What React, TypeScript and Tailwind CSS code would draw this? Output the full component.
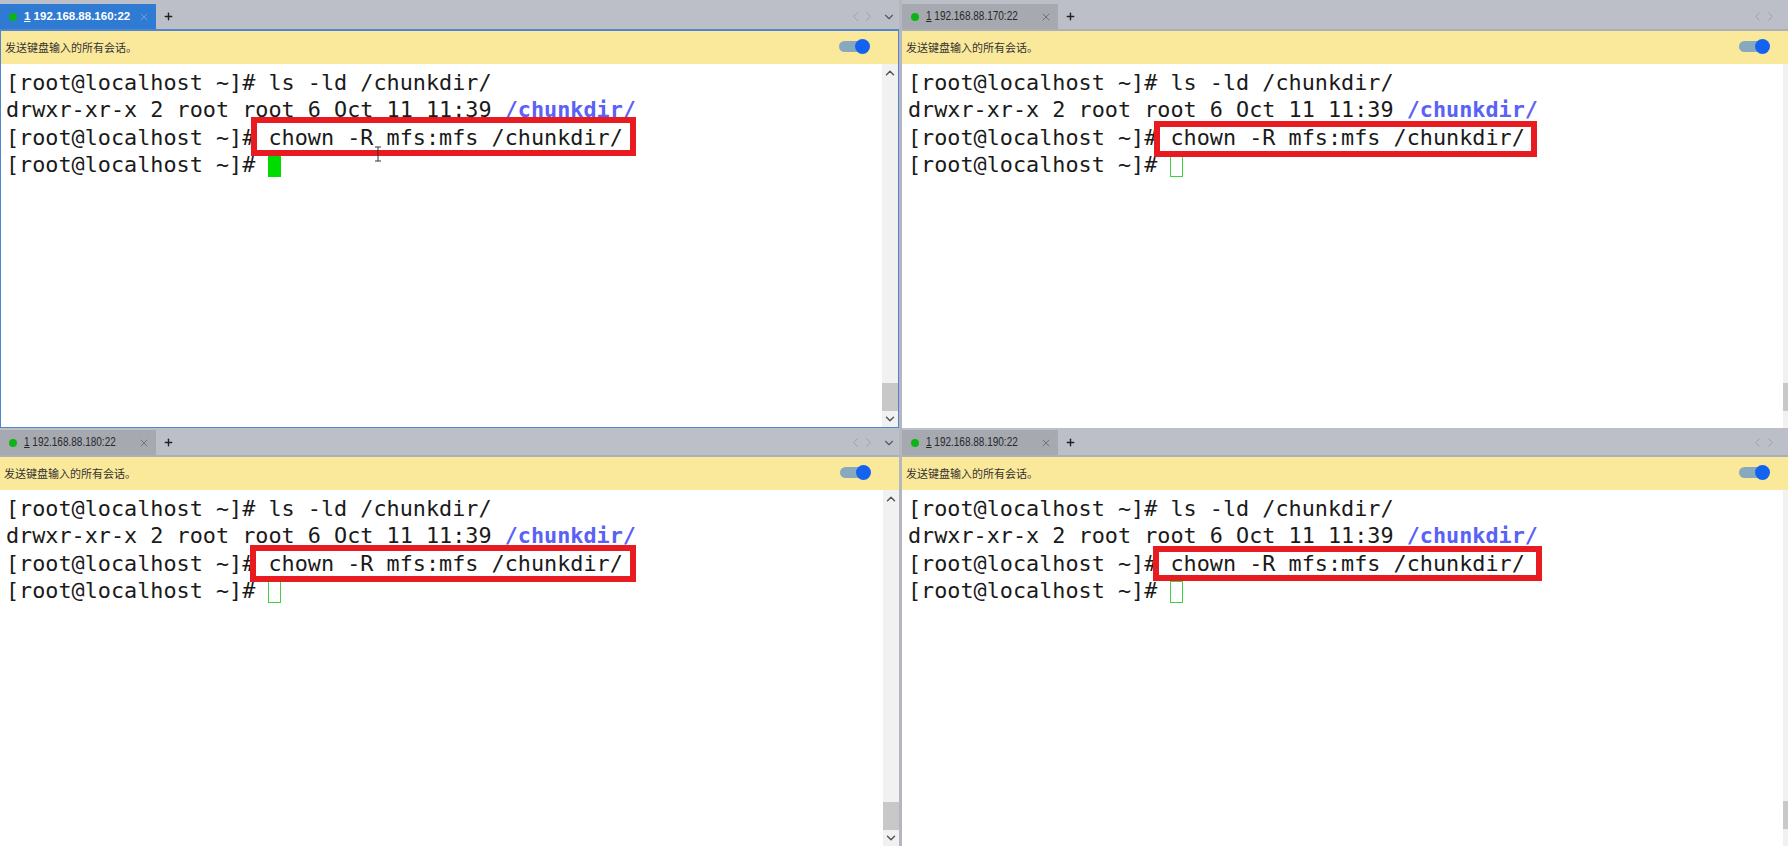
import { ChevronDown, ChevronLeft, ChevronRight, ChevronUp, Plus, X } from "lucide-react";

interface PaneProps {
  ip: string;
  active?: boolean;
  hasChevron?: boolean;
  narrowScroll?: boolean;
  tall?: boolean;
  boxClass: string;
}

const mono = "font-['DejaVu_Sans_Mono',monospace]";

const Pane = ({ ip, active, hasChevron, narrowScroll, tall, boxClass }: PaneProps) => {
  return (
    <div className="flex flex-col min-w-0 overflow-hidden bg-white">
      {/* tab strip */}
      <div className={`flex items-end shrink-0 bg-[#bcbfc7] ${tall ? "h-[27px]" : "h-[29px]"}`}>
        <div
          className={`flex items-center w-[156px] h-[25px] pl-[9px] pr-[6px] ${
            active ? "bg-[#2f7ad2] text-white" : "bg-[#a6a9b0] text-[#26282c]"
          }`}
        >
          <span className="w-[8px] h-[8px] rounded-full bg-[#0bb516] shrink-0" />
          {active ? (
            <span className="ml-[7px] text-[11.5px] font-bold font-['Liberation_Sans',sans-serif] whitespace-nowrap">
              <span className="underline">1</span> {ip}
            </span>
          ) : (
            <span className="ml-[7px] w-[92px] origin-left scale-x-[0.8] text-[12.5px] font-['Liberation_Sans',sans-serif] whitespace-nowrap">
              <span className="underline">1</span> {ip}
            </span>
          )}
          <X className={`ml-auto ${active ? "text-[#7eaadf]" : "text-[#5f6268]"}`} size={12} strokeWidth={1.5} />
        </div>
        <div className="flex items-center w-[24px] h-[25px] justify-center text-[#222]">
          <Plus size={11} strokeWidth={3} />
        </div>
        <div className="ml-auto flex items-center h-[25px] text-[#9a9da3]">
          <ChevronLeft size={15} strokeWidth={1.5} />
          <ChevronRight size={15} strokeWidth={1.5} className="-ml-[2px]" />
          {hasChevron ? (
            <ChevronDown size={14} strokeWidth={2} className="ml-[6px] mr-[3px] text-[#55585e]" />
          ) : (
            <span className="w-[10px]" />
          )}
        </div>
      </div>

      <div className={`flex flex-col flex-1 min-h-0 ${active ? "border border-[#4f86cf] border-t-2" : "border-t-2 border-[#aab0b8]"}`}>
        {/* send-input bar */}
        <div className="flex items-center shrink-0 h-[33px] bg-[#fbe99b] pl-[4px]">
          <span className="text-[11px] text-[#333] font-['Noto_Sans_CJK_SC',sans-serif]">发送键盘输入的所有会话。</span>
          <div className={`relative ml-auto mb-[2px] w-[30px] h-[11px] rounded-full bg-[#88a8bd] ${hasChevron ? "mr-[29px]" : "mr-[19px]"}`}>
            <span className="absolute -right-[1px] -top-[2px] w-[15px] h-[15px] rounded-full bg-[#1463f0]" />
          </div>
        </div>

        {/* terminal */}
        <div className="relative flex flex-1 min-h-0">
          <div
            className={`flex-1 pt-[5px] text-[21.8px] leading-[27.3px] text-[#1a1a1a] whitespace-pre ${mono} ${
              active ? "pl-[5px]" : "pl-[6px]"
            }`}
          >
            <div>[root@localhost ~]# ls -ld /chunkdir/</div>
            <div>
              drwxr-xr-x 2 root root 6 Oct 11 11:39 <span className="font-bold text-[#5a62f5]">/chunkdir/</span>
            </div>
            <div>[root@localhost ~]# chown -R mfs:mfs /chunkdir/</div>
            <div className="flex items-center">
              [root@localhost ~]#{" "}
              <span
                className={`w-[13px] h-[22px] mt-[3px] ${
                  active ? "bg-[#00dc00]" : "border border-[#3fd23f]"
                }`}
              />
            </div>
          </div>

          {/* red highlight round the chown command */}
          <div className={`absolute border-[6px] border-[#e81c20] ${boxClass}`} />

          {active && (
            <svg className="absolute left-[372px] top-[82px]" width="10" height="16" viewBox="0 0 10 16">
              <path d="M2 1h6M5 1v14M2 15h6" stroke="#333" strokeWidth="1" fill="none" />
            </svg>
          )}

          {/* scrollbar */}
          {narrowScroll ? (
            <div className="flex flex-col justify-end w-[5px] bg-[#f1f1f1] pb-[17px]">
              <div className="h-[28px] bg-[#c8c8c8]" />
            </div>
          ) : (
            <div className="flex flex-col w-[16px] bg-[#f1f1f1] items-center text-[#555]">
              <ChevronUp size={14} strokeWidth={2.5} className="mt-[2px]" />
              <div className="mt-auto w-full h-[28px] bg-[#c8c8c8]" />
              <ChevronDown size={14} strokeWidth={2.5} className="my-[1px]" />
            </div>
          )}
        </div>
      </div>
    </div>
  );
};

export default function App() {
  return (
    <div className="grid grid-cols-[899px_886px] grid-rows-[428px_418px] gap-x-[3px] w-[1788px] h-[846px] bg-[#b4b7bd] overflow-hidden">
      <Pane ip="192.168.88.160:22" active hasChevron boxClass="left-[250px] top-[53px] w-[385px] h-[39px]" />
      <Pane ip="192.168.88.170:22" narrowScroll boxClass="left-[252px] top-[57px] w-[383px] h-[36px]" />
      <Pane ip="192.168.88.180:22" hasChevron tall boxClass="left-[250px] top-[55px] w-[386px] h-[37px]" />
      <Pane ip="192.168.88.190:22" narrowScroll tall boxClass="left-[251px] top-[56px] w-[389px] h-[35px]" />
    </div>
  );
}
